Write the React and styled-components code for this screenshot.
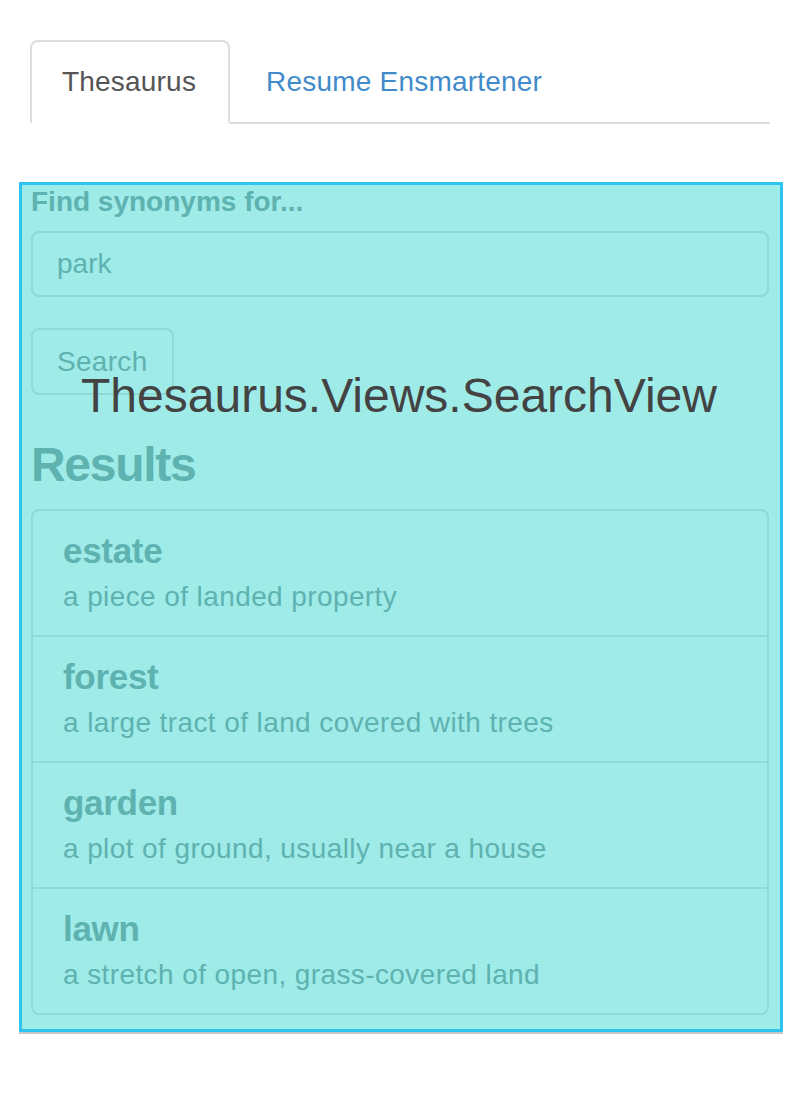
import React from "react";
import styled, { createGlobalStyle } from "styled-components";

const GlobalStyle = createGlobalStyle`
  html, body {
    margin: 0;
    padding: 0;
    background: #fff;
  }
  body {
    font-family: "Liberation Sans", Arial, Helvetica, sans-serif;
    color: #333;
  }
  * {
    box-sizing: border-box;
  }
`;

const Page = styled.div`
  padding: 40px 30px 60px;
`;

const Tabs = styled.ul`
  display: flex;
  list-style: none;
  margin: 0;
  padding: 0;
  border-bottom: 2px solid #ddd;
`;

const Tab = styled.li`
  margin-bottom: -2px;
  margin-right: 4px;
`;

const TabLink = styled.a`
  display: block;
  padding: 20px 32px 20px 30px;
  font-size: 28px;
  line-height: 40px;
  letter-spacing: 0.2px;
  text-decoration: none;
  border: 2px solid ${(props) => (props.active ? "#ddd" : "transparent")};
  border-bottom-color: ${(props) => (props.active ? "#fff" : "transparent")};
  border-radius: 8px 8px 0 0;
  background: ${(props) => (props.active ? "#fff" : "transparent")};
  color: ${(props) => (props.active ? "#555" : "#428bca")};
  cursor: pointer;
`;

const Panel = styled.div`
  position: relative;
  margin: 58px -13px 0 -11px;
  padding: 0 11px 14px 9px;
  background: #9eebe8;
  border: 3px solid #2ec4f1;
  box-shadow: 0 2px 0 #c8c8c8;
  color: #5eb2b0;
`;

const ViewName = styled.div`
  position: absolute;
  top: 187px;
  left: 0;
  right: 4px;
  text-align: center;
  font-size: 48px;
  line-height: 48px;
  color: #434343;
  pointer-events: none;
`;

const Label = styled.label`
  display: block;
  font-size: 28px;
  font-weight: bold;
  line-height: 34px;
  margin-bottom: 12px;
`;

const Input = styled.input`
  display: block;
  width: 100%;
  height: 66px;
  padding: 0 24px;
  font-family: inherit;
  font-size: 28px;
  color: #5eb2b0;
  background: transparent;
  border: 2px solid #8fdad7;
  border-radius: 8px;
  outline: none;
  margin-bottom: 31px;
`;

const Button = styled.button`
  display: block;
  height: 67px;
  padding: 0 24px;
  font-family: inherit;
  font-size: 28px;
  letter-spacing: 0.3px;
  color: #5eb2b0;
  background: transparent;
  border: 2px solid #8fdad7;
  border-radius: 8px;
`;

const Heading = styled.h3`
  margin: 43px 0 18px;
  font-size: 48px;
  font-weight: bold;
  letter-spacing: -1.3px;
  line-height: 53px;
`;

const List = styled.div`
  border: 2px solid #8fdad7;
  border-radius: 8px;
`;

const Item = styled.div`
  padding: 20px 30px 20px;
  border-top: ${(props) => (props.first ? "none" : "2px solid #8fdad7")};
`;

const Word = styled.h4`
  margin: 0 0 8px;
  font-size: 35px;
  font-weight: bold;
  letter-spacing: -0.3px;
  line-height: 40px;
`;

const Meaning = styled.p`
  margin: 0;
  font-size: 28px;
  letter-spacing: 0.4px;
  line-height: 36px;
`;

const results = [
  { word: "estate", meaning: "a piece of landed property" },
  { word: "forest", meaning: "a large tract of land covered with trees" },
  { word: "garden", meaning: "a plot of ground, usually near a house" },
  { word: "lawn", meaning: "a stretch of open, grass-covered land" },
];

export default function App() {
  return (
    <>
      <GlobalStyle />
      <Page>
        <Tabs>
          <Tab>
            <TabLink active>Thesaurus</TabLink>
          </Tab>
          <Tab>
            <TabLink>Resume Ensmartener</TabLink>
          </Tab>
        </Tabs>

        <Panel>
          <ViewName>Thesaurus.Views.SearchView</ViewName>
          <Label htmlFor="term">Find synonyms for...</Label>
          <Input id="term" defaultValue="park" />
          <Button>Search</Button>

          <Heading>Results</Heading>
          <List>
            {results.map((item, i) => (
              <Item key={item.word} first={i === 0}>
                <Word>{item.word}</Word>
                <Meaning>{item.meaning}</Meaning>
              </Item>
            ))}
          </List>
        </Panel>
      </Page>
    </>
  );
}
